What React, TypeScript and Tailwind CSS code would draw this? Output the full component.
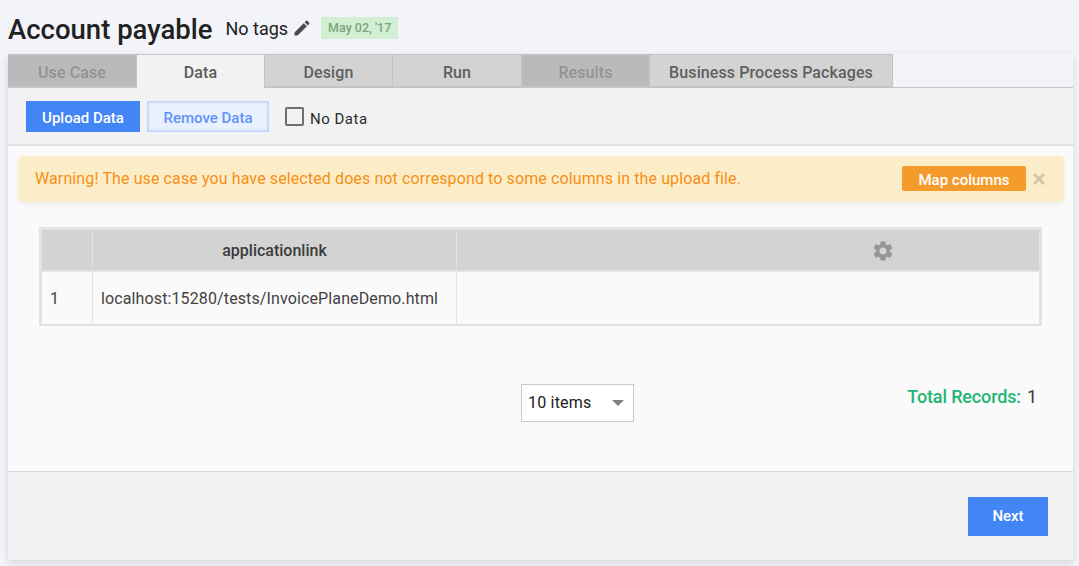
const tabs = [
    { label: "Use Case", state: "disabled", width: "w-[129px]" },
    { label: "Data", state: "active", width: "w-[128px]" },
    { label: "Design", state: "normal", width: "w-[128px]" },
    { label: "Run", state: "normal", width: "w-[129px]" },
    { label: "Results", state: "disabled", width: "w-[128px]" },
    { label: "Business Process Packages", state: "normal", width: "w-[243px]" },
];

function tabClass(state: string) {
    if (state === "active") return "bg-[#f2f2f2] text-[#5c5c5c] border-b-0 border-t-[#c4c4c4] pt-[3px]";
    if (state === "disabled") return "bg-[#bababa] text-[#939393] border-[#c4c4c4] border-b-2 pt-[5px]";
    return "bg-[#d3d3d3] text-[#5f5f5f] border-[#c4c4c4] border-b-2 pt-[5px]";
}

function Header() {
    return (
        <div className="flex h-[54px] items-center pl-2">
            <h1 className="mt-[6px] text-[27.5px] leading-none font-medium text-[#212121]">Account payable</h1>
            <span className="mt-[3px] ml-[13px] text-[18px] leading-none text-[#212121]">No tags</span>
            <svg viewBox="0 0 24 24" className="mt-[1px] ml-[4px] h-[20px] w-[20px] fill-[#4a4a4a]">
                <path d="M3 17.25V21h3.75L17.81 9.94l-3.75-3.75L3 17.25zM20.71 7.04a1 1 0 0 0 0-1.41l-2.34-2.34a1 1 0 0 0-1.41 0l-1.83 1.83 3.75 3.75 1.83-1.83z" />
            </svg>
            <span className="mt-[2px] ml-[9px] flex h-[22px] w-[77px] items-center justify-center bg-[#d3efd3] text-[12.5px] font-medium text-[#7ba47b]">
                May 02, '17
            </span>
        </div>
    );
}

function Tabs() {
    return (
        <div className="flex h-[34px]">
            {tabs.map((tab) => (
                <div
                    key={tab.label}
                    className={`flex items-center justify-center border-t border-r border-t-[#c4c4c4] border-r-[#c4c4c4] text-[16px] font-medium tracking-[0.1px] ${tab.width} ${tabClass(tab.state)}`}
                >
                    {tab.label}
                </div>
            ))}
            <div className="flex-1 border-b border-[#c4c4c4]" />
        </div>
    );
}

function Toolbar() {
    return (
        <div className="flex h-[58px] items-center border-b-2 border-[#e0e0e0] bg-[#f2f2f2] pl-[18px]">
            <button className="h-[31px] w-[114px] bg-[#4285f4] pt-[5px] text-[15px] font-medium text-white">Upload Data</button>
            <button className="ml-[7px] h-[31px] w-[122px] border border-[#bcd4fb] bg-[#e9f0fe] pt-[5px] text-[15px] font-medium text-[#5f94f6] shadow-[inset_0_0_3px_#a9c6fa]">
                Remove Data
            </button>
            <span className="ml-[16px] h-[19px] w-[19px] rounded-[2px] border-2 border-[#6e6e6e]" />
            <span className="mt-[6px] ml-[6px] text-[15px] tracking-[0.5px] text-[#2b2b2b]">No Data</span>
        </div>
    );
}

function Warning() {
    return (
        <div className="mr-[9px] ml-[10px] flex h-[46px] items-center rounded-[5px] bg-[#fcedc9] pr-[19px] pl-[17px] shadow-[0_2px_5px_rgba(0,0,0,0.06)]">
            <span className="flex-1 text-[16px] tracking-[0.11px] text-[#f78f14]">
                Warning! The use case you have selected does not correspond to some columns in the upload file.
            </span>
            <button className="-mt-[2px] h-[25px] w-[124px] rounded-[2px] bg-[#f49b2b] pt-[3px] text-[15px] font-medium text-white">Map columns</button>
            <svg viewBox="0 0 12 12" className="ml-[7px] h-[12px] w-[12px] stroke-[#cfc6ab]" strokeWidth="3">
                <path d="M1 1l10 10M11 1L1 11" />
            </svg>
        </div>
    );
}

function DataTable() {
    return (
        <div className="mt-[25px] mr-[31px] ml-[31px] border-[3px] border-b-2 border-[#e3e3e3]">
            <div className="flex h-[42px] border-b-2 border-[#e3e3e3] bg-[#d3d3d3]">
                <div className="w-[51px] border-r border-[#e3e3e3]" />
                <div className="flex w-[364px] items-center justify-center border-r border-[#e3e3e3] pt-[2px] text-[16px] font-medium text-[#3c3c3c]">
                    applicationlink
                </div>
                <div className="flex flex-1 items-center justify-center pl-[270px]">
                    <svg viewBox="0 0 24 24" className="mt-[2px] h-[24px] w-[24px] fill-[#969696]">
                        <path d="M19.14 12.94c.04-.3.06-.61.06-.94 0-.32-.02-.64-.07-.94l2.03-1.58a.49.49 0 0 0 .12-.61l-1.92-3.32a.488.488 0 0 0-.59-.22l-2.39.96c-.5-.38-1.03-.7-1.62-.94l-.36-2.54a.484.484 0 0 0-.48-.41h-3.84c-.24 0-.43.17-.47.41l-.36 2.54c-.59.24-1.13.57-1.62.94l-2.39-.96c-.22-.08-.47 0-.59.22L2.74 8.87c-.12.21-.08.47.12.61l2.03 1.58c-.05.3-.09.63-.09.94s.02.64.07.94l-2.03 1.58a.49.49 0 0 0-.12.61l1.92 3.32c.12.22.37.29.59.22l2.39-.96c.5.38 1.03.7 1.62.94l.36 2.54c.05.24.24.41.48.41h3.84c.24 0 .44-.17.47-.41l.36-2.54c.59-.24 1.13-.56 1.62-.94l2.39.96c.22.08.47 0 .59-.22l1.92-3.32c.12-.22.07-.47-.12-.61l-2.01-1.58zM12 15.6c-1.98 0-3.6-1.62-3.6-3.6s1.62-3.6 3.6-3.6 3.6 1.62 3.6 3.6-1.62 3.6-3.6 3.6z" />
                    </svg>
                </div>
            </div>
            <div className="flex h-[52px] bg-[#fafafa] text-[16px] tracking-[0.12px] text-[#424242]">
                <div className="flex w-[51px] items-center border-r border-[#e3e3e3] pt-[2px] pl-[8px]">1</div>
                <div className="flex w-[364px] items-center border-r border-[#e3e3e3] pt-[2px] pl-[8px]">localhost:15280/tests/InvoicePlaneDemo.html</div>
                <div className="flex-1" />
            </div>
        </div>
    );
}

function Pager() {
    return (
        <div className="relative mt-[58px] flex items-start justify-end pr-[36px]">
            <div className="absolute top-0 left-[513px] flex h-[38px] w-[113px] items-center justify-between border border-[#c9c9c9] bg-white pr-[9px] pl-[6px] text-[16px] tracking-[0.2px] text-[#212121]">
                10 items
                <span className="h-0 w-0 border-x-[6px] border-t-[6px] border-x-transparent border-t-[#808080]" />
            </div>
            <div className="-mt-[1px] flex items-center gap-[6px]">
                <span className="text-[18px] font-medium tracking-[-0.15px] text-[#22b573]">Total Records:</span>
                <span className="text-[18px] text-[#3a3a3a]">1</span>
            </div>
        </div>
    );
}

export default function App() {
    return (
        <div className="h-[566px] w-[1079px] overflow-hidden bg-[#f2f4f9] font-['Roboto',sans-serif]">
            <Header />
            <div className="ml-[8px] w-[1065px] shadow-[0_3px_8px_rgba(0,0,0,0.12)]">
                <Tabs />
                <Toolbar />
                <div className="h-[325px] bg-[#fafafa] pt-[10px]">
                    <Warning />
                    <DataTable />
                    <Pager />
                </div>
                <div className="flex h-[89px] justify-end border-t border-[#d8d8d8] bg-[#f2f2f2] pt-[25px] pr-[25px]">
                    <button className="h-[39px] w-[80px] bg-[#4285f4] text-[15px] font-medium text-white">Next</button>
                </div>
            </div>
        </div>
    );
}
